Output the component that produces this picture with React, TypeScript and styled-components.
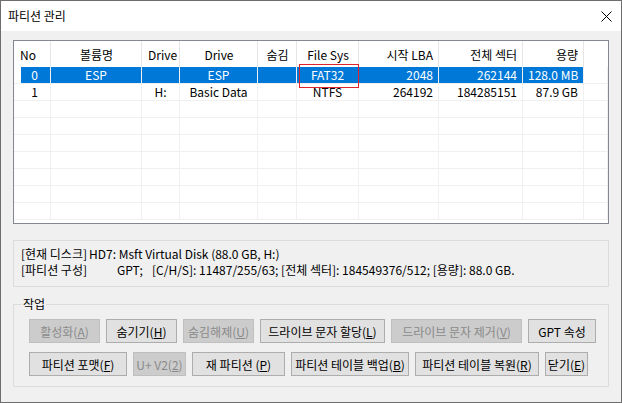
import React from "react";
import styled, {createGlobalStyle} from "styled-components";

const GlobalStyle = createGlobalStyle`
  body {
    margin: 0;
    font-family: "Noto Sans CJK KR", "Noto Sans", sans-serif;
    font-size: 12px;
    color: #000;
  }
`;

const GRID = "37px 91px 38px 78px 39px 62px 80px 84px 61px 1fr";

type Align = "left" | "center" | "right";

const columns: { head: string; headAlign: Align; align: Align }[] = [
  {head: "No", headAlign: "left", align: "center"},
  {head: "볼륨명", headAlign: "center", align: "center"},
  {head: "Drive", headAlign: "center", align: "center"},
  {head: "Drive", headAlign: "center", align: "center"},
  {head: "숨김", headAlign: "center", align: "center"},
  {head: "File Sys", headAlign: "center", align: "center"},
  {head: "시작 LBA", headAlign: "right", align: "right"},
  {head: "전체 섹터", headAlign: "right", align: "right"},
  {head: "용량", headAlign: "right", align: "right"},
];

const rows = [
  ["0", "ESP", "", "ESP", "", "FAT32", "2048", "262144", "128.0 MB"],
  ["1", "", "H:", "Basic Data", "", "NTFS", "264192", "184285151", "87.9 GB"],
];

const Window = styled.div`
  width: 622px;
  height: 403px;
  box-sizing: border-box;
  border: 1px solid #6d6d6d;
  display: flex;
  flex-direction: column;
  background: #f0f0f0;
`;

const TitleBar = styled.div`
  height: 30px;
  background: white;
  display: flex;
  align-items: center;
  justify-content: space-between;
  padding: 0 9px 0 7px;
`;

const Title = styled.span`
  font-size: 12px;
  line-height: 16px;
`;

const Body = styled.div`
  flex: 1;
  padding: 9px 12px 0 12px;
`;

const ListBox = styled.div`
  position: relative;
  height: 184px;
  box-sizing: border-box;
  border: 1px solid #828790;
  background: white;
  overflow: hidden;
`;

const HeaderRow = styled.div`
  display: grid;
  grid-template-columns: ${GRID};
  height: 26px;
`;

const HeadCell = styled.div<{ $align: Align }>`
  border-right: 1px solid #e5e5e5;
  padding: 4px 5px 0 6px;
  line-height: 20px;
  text-align: ${p => p.$align};
  white-space: nowrap;
  &:last-child {
    border-right: none;
  }
`;

const Row = styled.div<{ $selected?: boolean }>`
  display: grid;
  grid-template-columns: ${GRID};
  height: 17px;
  color: ${p => p.$selected ? "white" : "black"};
`;

const Cell = styled.div<{ $align: Align; $selected?: boolean }>`
  box-sizing: border-box;
  border-right: 1px solid #f0f0f0;
  border-bottom: 1px solid #f0f0f0;
  padding: 0 5px;
  line-height: 16px;
  text-align: ${p => p.$align};
  white-space: nowrap;
  background: ${p => p.$selected ? "#0078d7" : "transparent"};
  &:first-child {
    background: ${p => p.$selected ? "linear-gradient(to right, white 7px, #0078d7 7px)" : "transparent"};
    padding-left: 10px;
  }
  &:last-child {
    background: transparent;
  }
`;

const Marker = styled.div`
  position: absolute;
  left: 285px;
  top: 23px;
  width: 60px;
  height: 24px;
  box-sizing: border-box;
  border: 1px solid #e0242b;
`;

const InfoPanel = styled.div`
  margin-top: 16px;
  height: 47px;
  box-sizing: border-box;
  border: 1px solid #dcdcdc;
  padding: 5px 7px 0;
`;

const InfoLine = styled.div`
  display: flex;
  line-height: 16px;
  white-space: pre;
`;

const InfoField = styled.span<{ $w?: number }>`
  width: ${p => p.$w ? `${p.$w}px` : "auto"};
  flex: none;
`;

const Group = styled.fieldset`
  margin: 10px 0 0;
  border: 1px solid #dcdcdc;
  padding: 8px 12px 10px 15px;
  min-width: 0;
`;

const Legend = styled.legend`
  padding: 0 1px;
  margin-left: -7px;
  line-height: 14px;
`;

const ButtonRow = styled.div`
  display: flex;
  gap: 6px;
  & + & {
    margin-top: 9px;
  }
`;

const Btn = styled.button<{ $w: number }>`
  width: ${p => p.$w}px;
  height: 24px;
  box-sizing: border-box;
  border: 1px solid #adadad;
  background: #e1e1e1;
  font-family: inherit;
  font-size: 12px;
  color: #000;
  padding: 0;
  white-space: nowrap;
  &:disabled {
    background: #cccccc;
    border-color: #bfbfbf;
    color: #8a8a8a;
  }
`;

function CloseIcon() {
  return (
    <svg width="11" height="11" viewBox="0 0 11 11">
      <path d="M0.5 0.5 L10.5 10.5 M10.5 0.5 L0.5 10.5" stroke="#000" strokeWidth="1" fill="none"/>
    </svg>
  );
}

function Label({text, hot}: { text: string; hot: string }) {
  const i = text.lastIndexOf(hot);
  return <>{text.slice(0, i)}<u>{hot}</u>{text.slice(i + 1)}</>;
}

const row1 = [
  {text: "활성화(A)", hot: "A", w: 71, off: true},
  {text: "숨기기(H)", hot: "H", w: 71},
  {text: "숨김해제(U)", hot: "U", w: 71, off: true},
  {text: "드라이브 문자 할당(L)", hot: "L", w: 125},
  {text: "드라이브 문자 제거(V)", hot: "V", w: 131, off: true},
  {text: "GPT 속성", hot: "", w: 68},
];

const row2 = [
  {text: "파티션 포맷(F)", hot: "F", w: 98},
  {text: "U+ V2(2)", hot: "2", w: 53, off: true},
  {text: "재 파티션 (P)", hot: "P", w: 93},
  {text: "파티션 테이블 백업(B)", hot: "B", w: 118},
  {text: "파티션 테이블 복원(R)", hot: "R", w: 124},
  {text: "닫기(E)", hot: "E", w: 43},
];

function Buttons({items}: { items: typeof row1 }) {
  return (
    <ButtonRow>
      {items.map(b =>
        <Btn key={b.text} $w={b.w} disabled={b.off}>
          {b.hot ? <Label text={b.text} hot={b.hot}/> : b.text}
        </Btn>)}
    </ButtonRow>
  );
}

export default function App() {
  const empty = Array.from({length: 7});
  return (
    <>
      <GlobalStyle/>
      <Window>
        <TitleBar>
          <Title>파티션 관리</Title>
          <CloseIcon/>
        </TitleBar>
        <Body>
          <ListBox>
            <HeaderRow>
              {columns.map((c, i) => <HeadCell key={i} $align={c.headAlign}>{c.head}</HeadCell>)}
              <HeadCell $align="left"/>
            </HeaderRow>
            {rows.map((r, ri) =>
              <Row key={ri} $selected={ri === 0}>
                {r.map((v, i) => <Cell key={i} $align={columns[i].align} $selected={ri === 0}>{v}</Cell>)}
                <Cell $align="left"/>
              </Row>)}
            {empty.map((_, ri) =>
              <Row key={"e" + ri}>
                {columns.map((c, i) => <Cell key={i} $align={c.align}/>)}
                <Cell $align="left"/>
              </Row>)}
            <Marker/>
          </ListBox>
          <InfoPanel>
            <InfoLine>
              <InfoField $w={68}>[현재 디스크]</InfoField>
              <InfoField>HD7: Msft Virtual Disk (88.0 GB, H:)</InfoField>
            </InfoLine>
            <InfoLine>
              <InfoField $w={96}>[파티션 구성]</InfoField>
              <InfoField $w={35}>GPT;</InfoField>
              <InfoField>[C/H/S]: 11487/255/63; [전체 섹터]: 184549376/512; [용량]: 88.0 GB.</InfoField>
            </InfoLine>
          </InfoPanel>
          <Group>
            <Legend>작업</Legend>
            <Buttons items={row1}/>
            <Buttons items={row2}/>
          </Group>
        </Body>
      </Window>
    </>
  );
}
